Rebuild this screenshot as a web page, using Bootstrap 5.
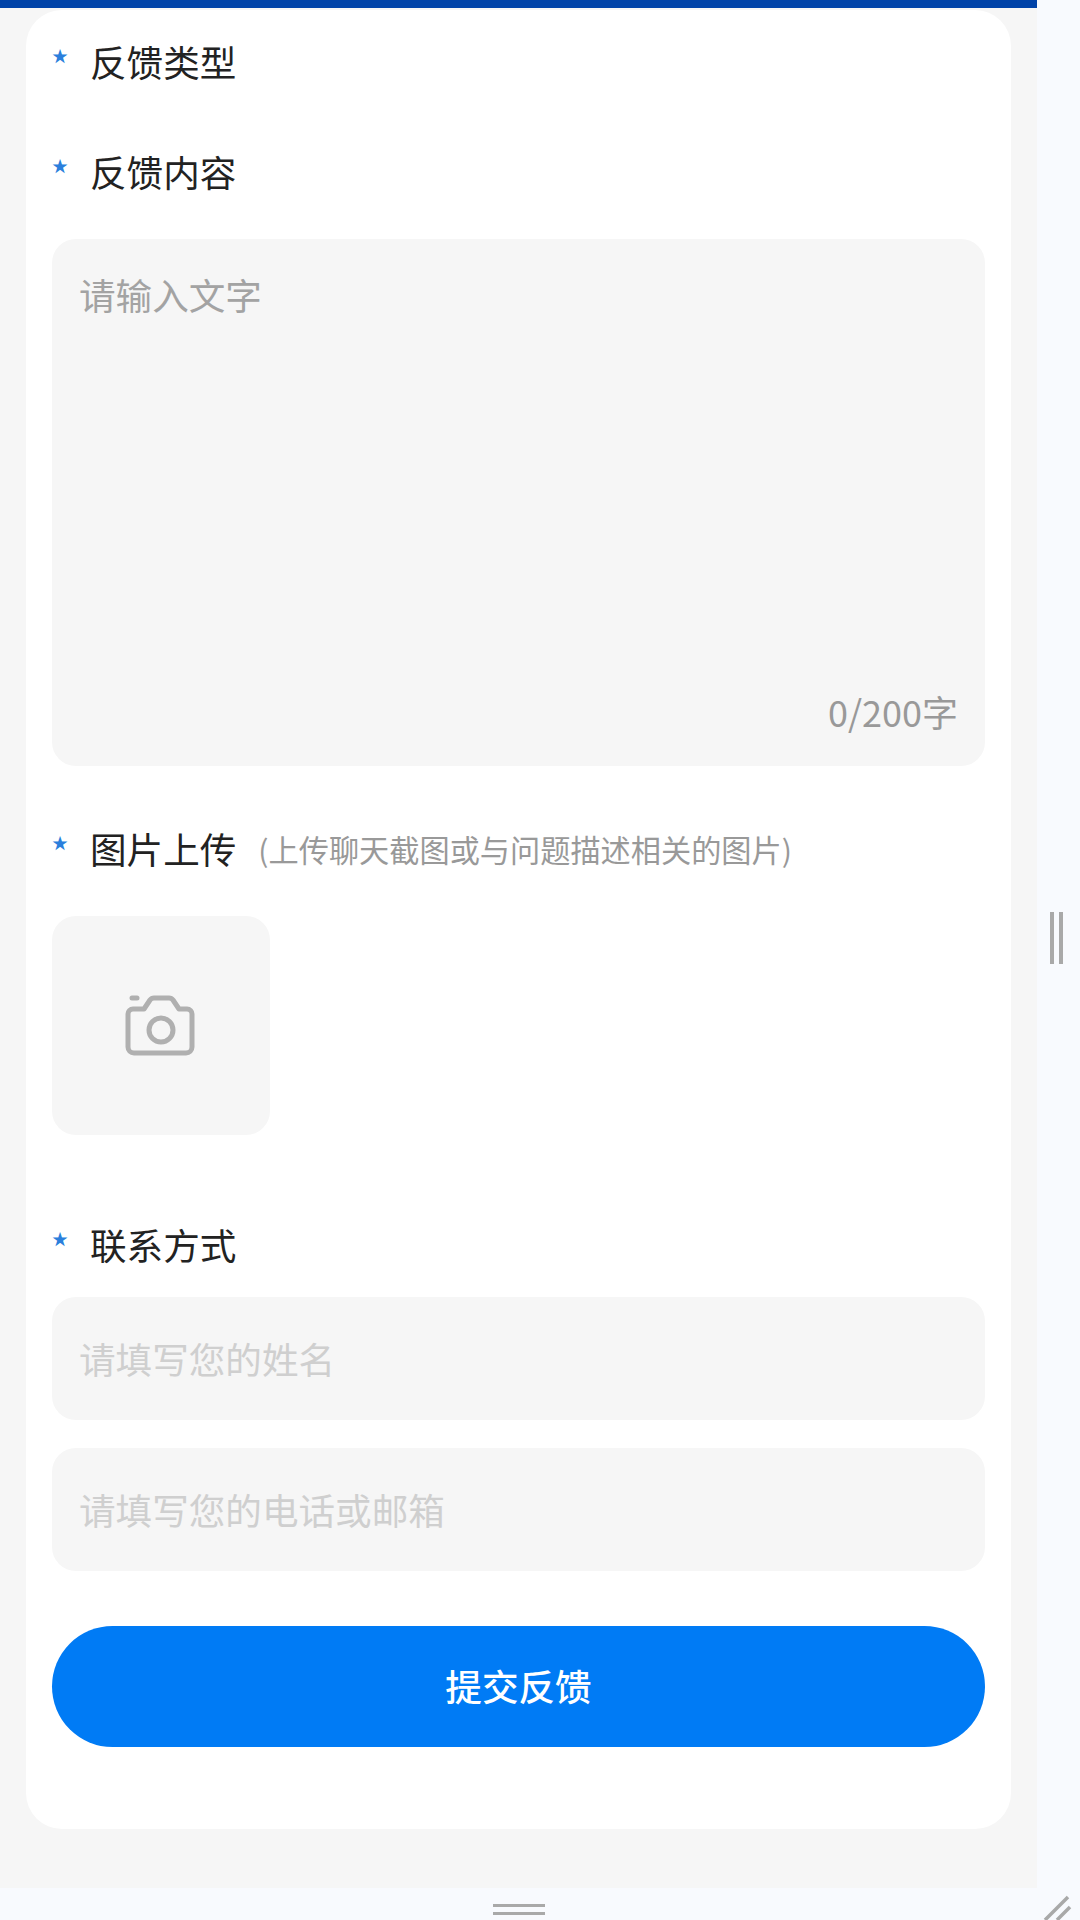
<!doctype html>
<html lang="zh">
<head>
<meta charset="utf-8">
<title>反馈</title>
<link rel="stylesheet" href="https://cdn.jsdelivr.net/npm/bootstrap@5.3.0/dist/css/bootstrap.min.css">
<style>
html,body{margin:0;width:1080px;height:1920px;overflow:hidden;background:#f8fafe;}
body{font-family:"Noto Sans CJK SC","Noto Sans",sans-serif;color:#222;}
.shell{width:1080px;height:1920px;position:relative;}
.main-col{width:1037px;height:1888px;background:#f6f6f6;}
.top-strip{height:8px;background:#0043a8;}
.form-panel{margin:2px 26px 0;height:1819px;background:#fff;border-radius:36px;padding:0 26px;}
.field-label{font-size:36.6px;line-height:44px;color:#222;}
.req-star{width:38px;font-size:16px;line-height:16px;color:#2b7fdc;margin-top:7px;flex:none;}
.hint{font-size:30.2px;color:#999;margin-left:22px;line-height:44px;}
.area-wrap{position:relative;margin-top:45px;}
.soft-field.form-control{background:#f6f6f6;border:0;border-radius:24px;box-shadow:none;font-size:36.6px;color:#222;padding:0 27px;}
.soft-field::placeholder{color:#cfcfcf;opacity:1;}
textarea.soft-field.form-control{height:527px;resize:none;padding:30px 27px;line-height:52px;}
textarea.soft-field::placeholder{color:#a3a3a3;}
.counter{position:absolute;right:27px;bottom:33px;font-size:36px;line-height:44px;color:#999;}
.shot-box{width:218px;height:219px;background:#f6f6f6;border-radius:24px;margin-top:45px;}
.line-field.form-control{height:123px;}
.send-btn.btn{height:121px;border-radius:61px;background:#007bf5;border:0;color:#fff;font-size:36.6px;font-weight:500;margin-top:55px;}
.lab-1{padding-top:30px;}
.lab-2{margin-top:66px;}
.lab-3{margin-top:61px;}
.lab-4{margin-top:88px;}
.gap-tight{margin-top:30px;}
.gap-small{margin-top:28px;}
.grip{position:absolute;display:block;}
.grip-side{left:1050px;top:912px;width:13px;height:52px;border-left:4px solid #a9a9a9;border-right:4px solid #a9a9a9;}
.grip-bottom{left:493px;top:1904px;width:52px;height:11px;border-top:3px solid #a9a9a9;border-bottom:3px solid #a9a9a9;}
.grip-corner{left:1042px;top:1892px;}
</style>
</head>
<body>
<div class="shell">
  <div class="main-col">
    <div class="top-strip"></div>
    <form class="form-panel d-flex flex-column">
      <div class="field-label d-flex lab-1"><span class="req-star">★</span><span>反馈类型</span></div>
      <div class="field-label d-flex lab-2"><span class="req-star">★</span><span>反馈内容</span></div>
      <div class="area-wrap">
        <textarea class="form-control soft-field" placeholder="请输入文字"></textarea>
        <span class="counter">0/200字</span>
      </div>
      <div class="field-label d-flex lab-3"><span class="req-star">★</span><span>图片上传</span><span class="hint">(上传聊天截图或与问题描述相关的图片)</span></div>
      <div class="shot-box d-flex align-items-center justify-content-center">
        <svg width="72" height="64" viewBox="0 0 72 64" fill="none" stroke="#b0b0b0" stroke-width="5" stroke-linecap="round" stroke-linejoin="round">
          <path d="M3 20a5 5 0 0 1 5-5h11l6-9a5 5 0 0 1 4-2h15a5 5 0 0 1 4 2l6 9h8a5 5 0 0 1 5 5v33a6 6 0 0 1-6 6H9a6 6 0 0 1-6-6z"/>
          <circle cx="36" cy="36" r="12"/>
          <path d="M7 4h5"/>
        </svg>
      </div>
      <div class="field-label d-flex lab-4"><span class="req-star">★</span><span>联系方式</span></div>
      <input class="form-control soft-field line-field gap-tight" type="text" placeholder="请填写您的姓名">
      <input class="form-control soft-field line-field gap-small" type="text" placeholder="请填写您的电话或邮箱">
      <button class="btn send-btn w-100" type="button">提交反馈</button>
    </form>
  </div>
  <span class="grip grip-side"></span>
  <span class="grip grip-bottom"></span>
  <svg class="grip grip-corner" width="32" height="28" viewBox="0 0 32 28" fill="none" stroke="#a9a9a9" stroke-width="3.5"><path d="M3 28 26 5M15 28 28 15"/></svg>
</div>
<script src="https://cdn.jsdelivr.net/npm/bootstrap@5.3.0/dist/js/bootstrap.bundle.min.js"></script>
</body>
</html>
